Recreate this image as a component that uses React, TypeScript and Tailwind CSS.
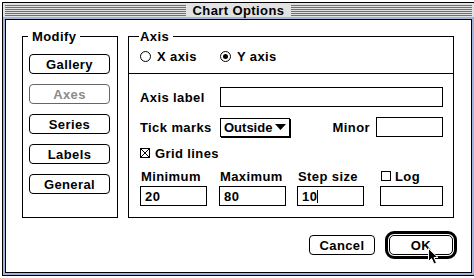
import React from "react";

function Stripes() {
  return (
    <div className="flex flex-1 flex-col gap-[1px]">
      {[0, 1, 2, 3, 4, 5].map((i) => (
        <div key={i} className="h-px bg-[#6f6f6f]" />
      ))}
    </div>
  );
}

function MacButton({ label, disabled }: { label: string; disabled?: boolean }) {
  return (
    <div
      className={
        disabled
          ? "flex h-[20px] w-[81px] items-center justify-center rounded-[4px] border border-[#666] text-[#8c8c8c]"
          : "flex h-[20px] w-[81px] items-center justify-center rounded-[4px] border border-black text-black"
      }
    >
      {label}
    </div>
  );
}

function Field({ w, children }: { w: string; children?: React.ReactNode }) {
  return (
    <div className={`flex h-[20px] items-center border border-black pl-[4px] ${w}`}>{children}</div>
  );
}

function Radio({ checked }: { checked?: boolean }) {
  return (
    <div className="flex h-[11px] w-[11px] items-center justify-center rounded-full border border-black">
      {checked ? <div className="h-[5px] w-[5px] rounded-full bg-black" /> : null}
    </div>
  );
}

function CheckBox({ checked }: { checked?: boolean }) {
  return (
    <svg width="10" height="10" viewBox="0 0 10 10" className="shrink-0">
      <rect x="0.5" y="0.5" width="9" height="9" fill="white" stroke="black" strokeWidth="1" />
      {checked ? (
        <g stroke="black" strokeWidth="1">
          <line x1="1" y1="1" x2="9" y2="9" />
          <line x1="9" y1="1" x2="1" y2="9" />
        </g>
      ) : null}
    </svg>
  );
}

export default function App() {
  return (
    <div className="h-[278px] w-[474px] overflow-hidden bg-white pl-[2px] pt-[2px] font-['Liberation_Sans',Arial,sans-serif] text-[13px] font-bold leading-none tracking-[0.4px] text-black">
      <div className="flex h-[274px] w-[473px] flex-col border border-black bg-[#a3b3da]">
        {/* title bar */}
        <div className="flex h-[14px] items-center bg-[#e2e2e2] px-[2px]">
          <Stripes />
          <div className="px-[7px] text-[13px] leading-none">Chart Options</div>
          <Stripes />
        </div>
        <div className="flex flex-1 flex-col px-[2px] pb-[2px] pt-[2px]">
          <div className="flex flex-1 flex-col border border-black bg-white">
            {/* groups */}
            <div className="flex gap-[10px] pl-[16px] pr-[17px] pt-[16px]">
              {/* Modify group */}
              <div className="relative h-[182px] w-[96px] border border-black">
                <span className="absolute left-[5px] top-[-7px] bg-white px-[4px] leading-[14px]">Modify</span>
                <div className="flex flex-col gap-[10px] pl-[6px] pt-[17px]">
                  <MacButton label="Gallery" />
                  <MacButton label="Axes" disabled />
                  <MacButton label="Series" />
                  <MacButton label="Labels" />
                  <MacButton label="General" />
                </div>
              </div>
              {/* Axis group */}
              <div className="relative flex h-[182px] w-[326px] flex-col border border-black">
                <span className="absolute left-[10px] top-[-7px] bg-white pl-[1px] pr-[4px] leading-[14px]">Axis</span>
                <div className="flex h-[37px] items-center border-b border-black pl-[11px] pt-[3px]">
                  <div className="flex w-[80px] items-center gap-[6px]">
                    <Radio />
                    <span>X axis</span>
                  </div>
                  <div className="flex items-center gap-[6px]">
                    <Radio checked />
                    <span>Y axis</span>
                  </div>
                </div>
                <div className="flex flex-col pl-[11px] pr-[10px]">
                  <div className="mt-[13px] flex h-[20px] items-center">
                    <span className="w-[80px]">Axis label</span>
                    <Field w="w-[223px]" />
                  </div>
                  <div className="mt-[10px] flex h-[20px] items-center">
                    <span className="w-[80px]">Tick marks</span>
                    <div className="flex h-[19px] w-[70px] items-center justify-between border border-black pl-[3px] pr-[3px] tracking-normal shadow-[1px_1px_0_#000]">
                      <span>Outside</span>
                      <svg width="11" height="6" viewBox="0 0 11 6">
                        <polygon points="0,0 11,0 5.5,6" fill="black" />
                      </svg>
                    </div>
                    <span className="ml-auto mr-[6px]">Minor</span>
                    <Field w="w-[67px]" />
                  </div>
                  <div className="mt-[10px] flex h-[12px] items-center gap-[5px]">
                    <CheckBox checked />
                    <span>Grid lines</span>
                  </div>
                  <div className="mt-[10px] flex h-[14px] items-center">
                    <span className="w-[67px] pl-[1px]">Minimum</span>
                    <span className="ml-[12px] w-[67px] pl-[1px]">Maximum</span>
                    <span className="ml-[11px] w-[67px] pl-[1px]">Step size</span>
                    <div className="ml-[16px] flex w-[63px] items-center gap-[4px] pl-[1px]">
                      <CheckBox />
                      <span>Log</span>
                    </div>
                  </div>
                  <div className="mt-[3px] flex h-[20px] items-center">
                    <Field w="w-[67px]">20</Field>
                    <div className="ml-[12px]">
                      <Field w="w-[67px]">80</Field>
                    </div>
                    <div className="ml-[11px]">
                      <Field w="w-[67px]">
                        <span>10</span>
                        <span className="h-[13px] w-px bg-black" />
                      </Field>
                    </div>
                    <div className="ml-[16px]">
                      <Field w="w-[63px]" />
                    </div>
                  </div>
                </div>
              </div>
            </div>
            {/* bottom buttons */}
            <div className="mt-[13px] flex items-center justify-end pr-[14px]">
              <div className="flex h-[20px] w-[66px] items-center justify-center rounded-[4px] border border-black">Cancel</div>
              <div className="relative ml-[10px] h-[28px] w-[72px] rounded-[9px] border-[3px] border-black p-[1px]">
                <div className="flex h-full w-full items-center justify-center rounded-[5px] border border-black">OK</div>
                <svg className="absolute left-[39px] top-[13px]" width="14" height="19" viewBox="0 0 14 19">
                  <path
                    d="M1.5 1.5 L1.5 14.5 L4.5 11.5 L7 17 L9.5 16 L7 10.5 L11 10.5 Z"
                    fill="black"
                    stroke="white"
                    strokeWidth="1"
                    strokeLinejoin="miter"
                  />
                </svg>
              </div>
            </div>
          </div>
        </div>
      </div>
    </div>
  );
}
